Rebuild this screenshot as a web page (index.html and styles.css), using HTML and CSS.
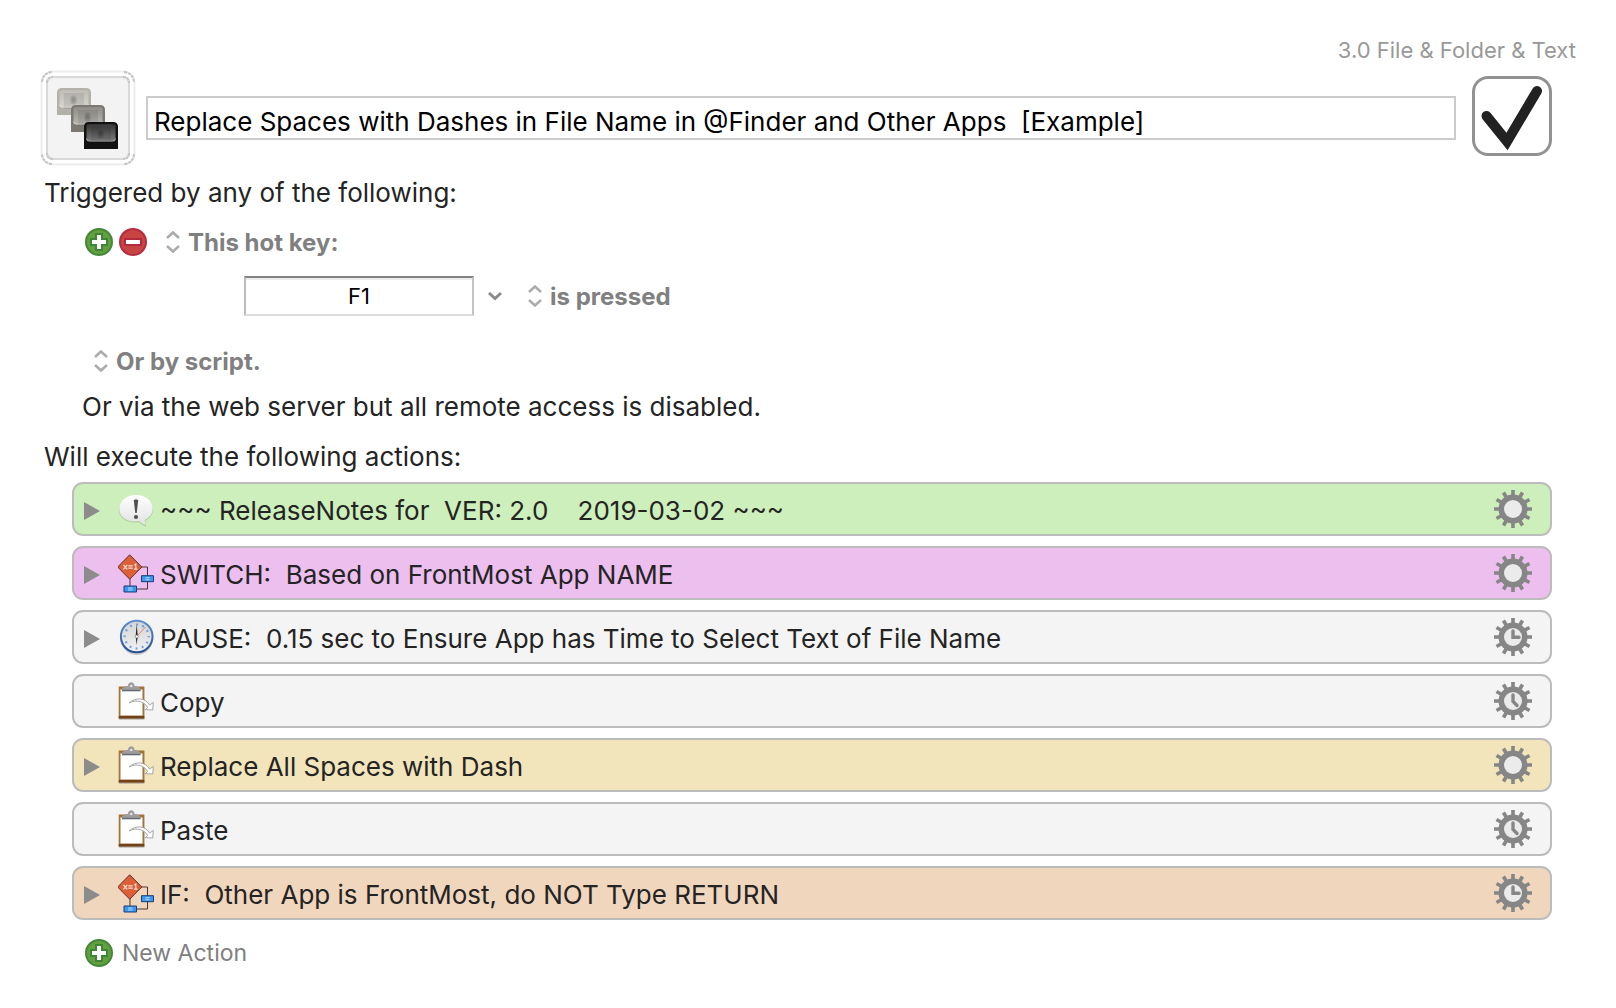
FILE: index.html
```
<!DOCTYPE html>
<html lang="en">
<head>
<meta charset="utf-8">
<meta name="viewport" content="width=device-width, initial-scale=1">
<title>Macro Editor</title>
<link rel="stylesheet" href="styles.css">
</head>
<body>
<svg class="defs" aria-hidden="true">
  <defs>
    <linearGradient id="bubbleFill" x1="0" y1="0" x2="0" y2="1"><stop offset="0" stop-color="#fff"/><stop offset="1" stop-color="#e2e2e2"/></linearGradient>
    <linearGradient id="faceFill" x1="0" y1="0" x2="0" y2="1"><stop offset="0" stop-color="#d4d4d4"/><stop offset="1" stop-color="#f2f2f2"/></linearGradient>
    <linearGradient id="rimFill" x1="0" y1="0" x2="0" y2="1"><stop offset="0" stop-color="#5f8fd0"/><stop offset="1" stop-color="#274f92"/></linearGradient>
    <linearGradient id="keyGloss" x1="0" y1="0" x2="0" y2="1"><stop offset="0" stop-color="#fff" stop-opacity=".15"/><stop offset="1" stop-color="#fff" stop-opacity=".45"/></linearGradient>
    <symbol id="plus" viewBox="0 0 28 28">
      <circle cx="14" cy="14" r="13" fill="#639f3f" stroke="#43883a" stroke-width="2"/>
      <path d="M11 6h6v5h5v6h-5v5h-6v-5H6v-6h5z" fill="#fff" stroke="#3c8637" stroke-width="2"/>
    </symbol>
    <symbol id="minus" viewBox="0 0 28 28">
      <circle cx="14" cy="14" r="13" fill="#c64542" stroke="#b62c40" stroke-width="2"/>
      <path d="M6 11h16v6H6z" fill="#fff" stroke="#b32a3c" stroke-width="2"/>
    </symbol>
    <symbol id="updown" viewBox="0 0 14 22">
      <path d="M1 7l6-5.500L13 7M1 15l6 5.500L13 15" fill="none" stroke="#acacac" stroke-width="2.600"/>
    </symbol>
    <symbol id="triangle" viewBox="0 0 16 18"><path d="M0 0l16 9L0 18z" fill="#8c8c8c"/></symbol>
    <symbol id="gear" viewBox="0 0 38 38">
      <path d="M19 0v38M0 19h38M9.500 2.500l19 33M28.500 2.500l-19 33M2.500 9.500l33 19M35.500 9.500l-33 19" stroke="#868686" stroke-width="3.600"/>
      <circle cx="19" cy="19" r="14.500" fill="#868686"/>
      <circle cx="19" cy="19" r="9" fill="#ebebeb"/>
    </symbol>
    <symbol id="gear-three" viewBox="0 0 38 38">
      <use href="#gear"/>
      <path d="M19 13v6.300h6" fill="none" stroke="#868686" stroke-width="3.400" stroke-linecap="round"/>
    </symbol>
    <symbol id="gear-five" viewBox="0 0 38 38">
      <use href="#gear"/>
      <path d="M19 13v6.300l4 4.200" fill="none" stroke="#868686" stroke-width="3.400" stroke-linecap="round"/>
    </symbol>
    <symbol id="note" viewBox="0 0 38 40">
      <path d="M18 6c9.700 0 17 6 17 14 0 4.500-3 8.500-8 11 .2 2 .5 3.500 1 5.500-3-.8-5-2.200-6.500-4.200C9 34 1 28 1 20 1 12 8.500 6 18 6z" fill="#6b7b60" opacity=".3"/>
      <path d="M18 5c9.700 0 16.700 6 16.700 14 0 4.500-3 8.500-8 11 0 2 .3 3.500.8 5-3-.8-4.500-2.200-6-4C9 33 1.300 27 1.300 19 1.300 11 8.500 5 18 5z" fill="url(#bubbleFill)"/>
      <path d="M15.800 10.500c0-1.500 4.400-1.500 4.400 0L18.700 23h-1.400z" fill="#505050"/><circle cx="18" cy="27" r="2.100" fill="#505050"/>
    </symbol>
    <symbol id="flow" viewBox="0 0 38 40">
      <path d="M23 13h6.500v22H12V22" fill="none" stroke="#4a3435" stroke-width="1"/>
      <path d="M11.700 .8L23.800 13 11.700 25.200-.3 13z" fill="#dc5f38" stroke="#63302a" stroke-width="1"/>
      <path d="M5.500 10.800l3.800 4.600m0-4.600l-3.800 4.600M10.300 11.800h4.400m-4.400 2.300h4.400M16.200 11l1.600-1v5.200m-1.900 0h3.600" fill="none" stroke="#f9dfd6" stroke-width="1.200"/>
      <path d="M23.500 21.700h12v6h-12zM6 32h12.500v6H6z" fill="#3b98f4" stroke="#1d3c70" stroke-width="1"/>
      <path d="M27.500 23.700h4m-4 2h4M10 34h4.500m-4.500 2h4.500" stroke="#b5dcff" stroke-width="1"/>
    </symbol>
    <symbol id="clock" viewBox="0 0 38 40">
      <ellipse cx="18.700" cy="20" rx="16.500" ry="17" fill="#777" opacity=".35"/>
      <circle cx="18.700" cy="18.500" r="15.800" fill="url(#faceFill)" stroke="url(#rimFill)" stroke-width="2"/>
      <circle cx="18.700" cy="18.500" r="12" fill="none" stroke="#6f9fe0" stroke-width="2.200" stroke-dasharray="2 4.283" stroke-dashoffset="1"/>
      <path d="M19 18l8.500-9" stroke="#e5836f" stroke-width="1"/>
      <path d="M18.700 6l1 12-1 9-1-9z" fill="#222"/><circle cx="18.700" cy="18.500" r="1.600" fill="#fff" stroke="#666" stroke-width=".6"/>
    </symbol>
    <symbol id="clipboard" viewBox="0 0 38 40">
      <path d="M1 5h25.500v33H1z" fill="#777" opacity=".35"/>
      <path d="M.7 4.500h25.600v32H.7z" fill="#a3733a"/>
      <path d="M.7 34h25.600v2.500H.7z" fill="#70431d"/>
      <path d="M2.500 7.500h22v26h-22z" fill="#fff"/>
      <path d="M4 8.500c0-3 3-4.500 6-4.500 0-5 6.500-5 6.500 0 3 0 6 1.500 6 4.500z" fill="#9d9d9d"/><path d="M4 7.800h18.500v1.500H4z" fill="#656b70"/><circle cx="13.200" cy="4" r="1.300" fill="#e4e4e4"/>
      <path d="M11 21c7-6 16-5.500 20.500 2l3.800-2.500-.6 7.500-7.500-.3 2.600-2.200C25 18.500 18 17.500 11 21z" fill="#fff" stroke="#a5a5a5" stroke-width="1"/>
    </symbol>
    <symbol id="key" viewBox="0 0 34 27">
      <path d="M0 27V5q0-5 5-5h24q5 0 5 5v22z"/>
      <path d="M2.500 3.500q0-1.500 3-1.500h23q3 0 3 1.500V17q0 2-3 2h-23q-3 0-3-2z" fill="url(#keyGloss)"/>
      <path d="M7 5h20v16H7z" fill="#000" opacity=".08"/>
      <path d="M2.500 16.500q0 2.800 3 2.800h23q3 0 3-2.800" fill="none" stroke="#fff" stroke-opacity=".45"/>
      <ellipse cx="16.500" cy="12" rx="3.300" ry="4.500" fill="#000" opacity=".12"/>
      <ellipse cx="16.500" cy="12" rx="1.800" ry="2.600" fill="#000" opacity=".1"/>
    </symbol>
  </defs>
</svg>
<main class="editor">
  <p class="category">3.0 File &amp; Folder &amp; Text</p>

  <header class="header">
    <button class="macro-icon" type="button" aria-label="Macro icon">
      <svg viewBox="0 0 96 96" width="96" height="96">
        <rect x="1.500" y="1.500" width="93" height="93" rx="11" fill="#fff" stroke="#ededed" stroke-width="2"/>
        <rect x="7" y="7" width="82" height="82" rx="6" fill="#f3f3f3" stroke="#d9d9d9" stroke-width="2"/>
        <path d="M2 12Q3 3 12 2M84 2q9 1 10 10M94 84q-1 9-10 10M12 94q-9-1-10-10M7 13q0-6 6-6M83 7q6 0 6 6M89 83q0 6-6 6M13 89q-6 0-6-6" fill="none" stroke="#c4c4c4" stroke-width="2" stroke-dasharray="3 1"/>
        <use href="#key" x="17" y="18" width="34" height="27" fill="#b3b1a9"/>
        <use href="#key" x="31" y="35" width="34" height="27" fill="#7b7871"/>
        <use href="#key" x="44" y="52" width="34" height="27" fill="#111"/>
      </svg>
    </button>
    <input class="macro-name" type="text" aria-label="Macro name" value="Replace Spaces with Dashes in File Name in @Finder and Other Apps  [Example]">
    <label class="enable">
      <input class="enable-box" type="checkbox" aria-label="Macro enabled" checked>
      <svg class="enable-mark" viewBox="0 0 80 80" width="80" height="80"><path d="M14.500 40L35 65.500 65 15" fill="none" stroke="#222" stroke-width="10" stroke-linecap="round"/></svg>
    </label>
  </header>

  <section class="triggers">
    <h2 class="heading">Triggered by any of the following:</h2>
    <div class="trigger-row">
      <button class="round" type="button" aria-label="Add trigger"><svg width="28" height="28"><use href="#plus"/></svg></button>
      <button class="round" type="button" aria-label="Remove trigger"><svg width="28" height="28"><use href="#minus"/></svg></button>
      <label class="popup popup-type"><svg width="14" height="22"><use href="#updown"/></svg><select aria-label="Trigger type"><option>This hot key:</option></select></label>
    </div>
    <div class="hotkey-row">
      <input class="hotkey" type="text" aria-label="Hot key" value="F1">
      <button class="chevron" type="button" aria-label="Hot key options"><svg viewBox="0 0 14 10" width="14" height="10"><path d="M1 2l6 5.500L13 2" fill="none" stroke="#8b8b8b" stroke-width="3"/></svg></button>
      <label class="popup"><svg width="14" height="22"><use href="#updown"/></svg><select aria-label="Key event"><option>is pressed</option></select></label>
    </div>
    <div class="script-row">
      <label class="popup"><svg width="14" height="22"><use href="#updown"/></svg><select aria-label="Script trigger"><option>Or by script.</option></select></label>
    </div>
    <p class="remote">Or via the web server but all remote access is disabled.</p>
  </section>

  <section class="actions">
    <h2 class="heading">Will execute the following actions:</h2>
    <ol class="list">
      <li class="action green">
        <button class="disclose" type="button" aria-label="Expand"><svg width="16" height="18"><use href="#triangle"/></svg></button>
        <svg class="kind" width="38" height="40"><use href="#note"/></svg>
        <span class="title">~~~ ReleaseNotes for  VER: 2.0    2019-03-02 ~~~</span>
        <button class="gear" type="button" aria-label="Action options"><svg width="38" height="38"><use href="#gear"/></svg></button>
      </li>
      <li class="action violet">
        <button class="disclose" type="button" aria-label="Expand"><svg width="16" height="18"><use href="#triangle"/></svg></button>
        <svg class="kind" width="38" height="40"><use href="#flow"/></svg>
        <span class="title">SWITCH:  Based on FrontMost App NAME</span>
        <button class="gear" type="button" aria-label="Action options"><svg width="38" height="38"><use href="#gear"/></svg></button>
      </li>
      <li class="action">
        <button class="disclose" type="button" aria-label="Expand"><svg width="16" height="18"><use href="#triangle"/></svg></button>
        <svg class="kind" width="38" height="40"><use href="#clock"/></svg>
        <span class="title">PAUSE:  0.15 sec to Ensure App has Time to Select Text of File Name</span>
        <button class="gear" type="button" aria-label="Action options"><svg width="38" height="38"><use href="#gear-three"/></svg></button>
      </li>
      <li class="action">
        <span class="disclose"></span>
        <svg class="kind" width="38" height="40"><use href="#clipboard"/></svg>
        <span class="title">Copy</span>
        <button class="gear" type="button" aria-label="Action options"><svg width="38" height="38"><use href="#gear-five"/></svg></button>
      </li>
      <li class="action yellow">
        <button class="disclose" type="button" aria-label="Expand"><svg width="16" height="18"><use href="#triangle"/></svg></button>
        <svg class="kind" width="38" height="40"><use href="#clipboard"/></svg>
        <span class="title">Replace All Spaces with Dash</span>
        <button class="gear" type="button" aria-label="Action options"><svg width="38" height="38"><use href="#gear"/></svg></button>
      </li>
      <li class="action">
        <span class="disclose"></span>
        <svg class="kind" width="38" height="40"><use href="#clipboard"/></svg>
        <span class="title">Paste</span>
        <button class="gear" type="button" aria-label="Action options"><svg width="38" height="38"><use href="#gear-five"/></svg></button>
      </li>
      <li class="action orange">
        <button class="disclose" type="button" aria-label="Expand"><svg width="16" height="18"><use href="#triangle"/></svg></button>
        <svg class="kind" width="38" height="40"><use href="#flow"/></svg>
        <span class="title">IF:  Other App is FrontMost, do NOT Type RETURN</span>
        <button class="gear" type="button" aria-label="Action options"><svg width="38" height="38"><use href="#gear-three"/></svg></button>
      </li>
    </ol>
    <button class="new-action" type="button"><svg width="28" height="28"><use href="#plus"/></svg>New Action</button>
  </section>
</main>
</body>
</html>
```
FILE: styles.css
```
* { box-sizing: border-box; }

body {
  margin: 0;
  background: #fff;
  color: #242424;
  font: 26px/32px Inter, "Liberation Sans", sans-serif;
}

svg { display: block; flex: none; overflow: visible; }
.defs { position: absolute; width: 0; height: 0; }

button, input, select { font: inherit; color: inherit; }
button { padding: 0; border: 0; background: none; }

.editor { padding: 34px 0 36px; }

.category {
  margin: 0 40px 4px;
  color: #999;
  font-size: 22px;
  text-align: right;
}

.header {
  display: flex;
  align-items: center;
  padding: 0 64px 0 40px;
}

.macro-name {
  flex: 1;
  min-width: 0;
  height: 44px;
  margin: 0 16px 0 10px;
  padding: 6px 6px 0;
  border: 2px solid #ccc;
  border-radius: 0;
  background: #fff;
  color: #000;
}

.enable {
  display: grid;
  flex: none;
  margin-bottom: 4px;
}
.enable-box, .enable-mark { grid-area: 1 / 1; }
.enable-box {
  appearance: none;
  width: 80px;
  height: 80px;
  margin: 0;
  border: 3px solid #929292;
  border-radius: 16px;
}
.enable-mark { visibility: hidden; pointer-events: none; }
.enable-box:checked + .enable-mark { visibility: visible; }

.heading {
  margin: 0;
  padding-left: 44px;
  font-size: inherit;
  font-weight: 400;
}

.triggers { padding-top: 11px; }

.trigger-row {
  display: flex;
  align-items: center;
  gap: 6px;
  margin-top: 16px;
  padding-left: 85px;
}

.popup {
  display: flex;
  align-items: center;
  gap: 8px;
  color: #808080;
  font-size: 24px;
  font-weight: 700;
}
.popup-type { margin-left: 13px; }
.popup select {
  appearance: none;
  height: 34px;
  padding: 2px 0 0;
  border: 0;
  background: none;
}

.hotkey-row {
  display: flex;
  align-items: center;
  margin-top: 17px;
  padding-left: 244px;
}
.hotkey {
  width: 230px;
  height: 40px;
  padding: 0;
  border: 2px solid;
  border-color: #828282 #c4c4c4 #dcdcdc #bcbcbc;
  border-radius: 0;
  background: #fff;
  box-shadow: inset 0 2px #ececec;
  color: #000;
  font-size: 22px;
  text-align: center;
}
.chevron { margin: 0 26px 0 14px; }

.script-row { display: flex; margin-top: 28px; padding-left: 94px; }

.remote { margin: 13px 0 18px; padding-left: 82px; }

.list {
  display: grid;
  gap: 10px;
  margin: 9px 64px 17px 72px;
  padding: 0;
  list-style: none;
}

.action {
  display: flex;
  align-items: center;
  height: 54px;
  padding: 0 18px 0 10px;
  border: 2px solid #bcbcbc;
  border-radius: 11px;
  background: #f4f4f4;
}
.green { background: #cdefbb; }
.violet { background: #ecbfef; }
.yellow { background: #f2e4bb; }
.orange { background: #f0d6bc; }

.disclose { width: 16px; margin-top: 4px; }
.kind { margin: 2px 4px 0 18px; }
.title { flex: 1; padding-top: 4px; white-space: pre; }

.new-action {
  display: flex;
  align-items: center;
  gap: 9px;
  margin-left: 85px;
  color: #808080;
  font-size: 23px;
}
```
